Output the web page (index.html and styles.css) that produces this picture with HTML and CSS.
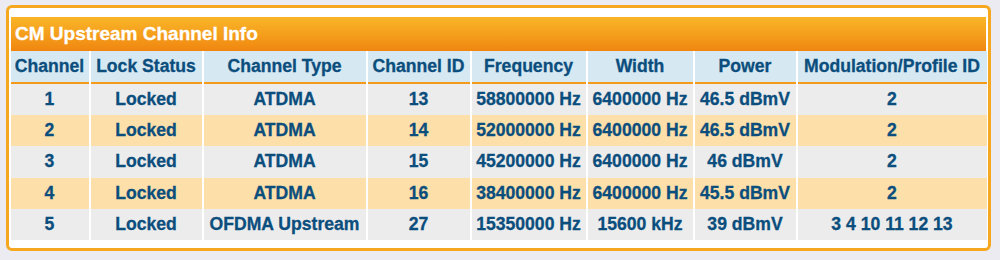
FILE: index.html
```html
<!DOCTYPE html>
<html>
<head>
<meta charset="utf-8">
<link rel="stylesheet" href="styles.css">
</head>
<body>
<div class="panel">
  <div class="panel-title">CM Upstream Channel Info</div>
  <table class="channels">
    <colgroup>
      <col class="c-ch"><col class="c-lock"><col class="c-type"><col class="c-id"><col class="c-freq"><col class="c-width"><col class="c-power"><col class="c-mod">
    </colgroup>
    <thead>
      <tr>
        <th>Channel</th><th>Lock Status</th><th>Channel Type</th><th>Channel ID</th><th>Frequency</th><th>Width</th><th>Power</th><th>Modulation/Profile ID</th>
      </tr>
    </thead>
    <tbody>
      <tr class="odd"><td>1</td><td>Locked</td><td>ATDMA</td><td>13</td><td>58800000 Hz</td><td>6400000 Hz</td><td>46.5 dBmV</td><td>2</td></tr>
      <tr class="even"><td>2</td><td>Locked</td><td>ATDMA</td><td>14</td><td>52000000 Hz</td><td>6400000 Hz</td><td>46.5 dBmV</td><td>2</td></tr>
      <tr class="odd"><td>3</td><td>Locked</td><td>ATDMA</td><td>15</td><td>45200000 Hz</td><td>6400000 Hz</td><td>46 dBmV</td><td>2</td></tr>
      <tr class="even"><td>4</td><td>Locked</td><td>ATDMA</td><td>16</td><td>38400000 Hz</td><td>6400000 Hz</td><td>45.5 dBmV</td><td>2</td></tr>
      <tr class="odd"><td>5</td><td>Locked</td><td>OFDMA Upstream</td><td>27</td><td>15350000 Hz</td><td>15600 kHz</td><td>39 dBmV</td><td>3 4 10 11 12 13</td></tr>
    </tbody>
  </table>
</div>
</body>
</html>
```

FILE: styles.css
```css
html, body {
  margin: 0;
  padding: 0;
  background: #ebebf1;
}
body {
  padding: 5px 9px 0 6px;
  font-family: "Liberation Sans", Arial, Helvetica, sans-serif;
}
.panel {
  border: 3px solid #f5a81f;
  border-radius: 6px;
  background: #ffffff;
  padding: 9px 2px 8px 2px;
  box-sizing: content-box;
  width: 975px;
}
.panel-title {
  height: 34px;
  line-height: 34px;
  padding-left: 4px;
  color: #ffffff;
  font-weight: bold;
  font-size: 19px;
  -webkit-text-stroke: 0.3px #ffffff;
  background: linear-gradient(to bottom, #f9b527 0%, #f59f1d 50%, #f0860f 100%);
}
.channels {
  border-collapse: separate;
  border-spacing: 2.5px 0;
  table-layout: fixed;
  width: calc(100% + 5px);
  margin: 0 -2.5px;
  color: #0b4e7d;
  font-weight: bold;
  font-size: 17.6px;
  -webkit-text-stroke: 0.3px #0b4e7d;
}
.channels th {
  background: #d6e8f2;
  height: 31px;
  padding: 0;
  border-bottom: 2.5px solid #f39a1b;
  text-align: center;
  white-space: nowrap;
  font-weight: bold;
}
.channels td {
  height: 31.2px;
  padding: 0;
  text-align: center;
  white-space: nowrap;
}
.channels tr.odd td { background: #ececec; }
.channels tr.even td { background: #fddfa9; }
.c-ch { width: 78px; }
.c-lock { width: 111px; }
.c-type { width: 162px; }
.c-id { width: 102px; }
.c-freq { width: 114px; }
.c-width { width: 105px; }
.c-power { width: 101px; }
.c-mod { width: auto; }
```
